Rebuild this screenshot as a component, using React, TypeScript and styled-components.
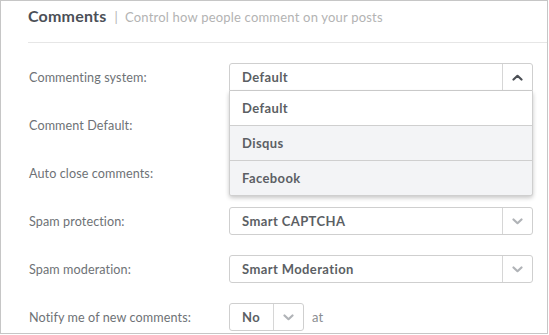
import { createGlobalStyle } from "styled-components";
import styled from "styled-components";

const GlobalStyle = createGlobalStyle`
  html, body {
    margin: 0;
    padding: 0;
    background: #ffffff;
  }
  body {
    font-family: Lato, "Open Sans", "Liberation Sans", sans-serif;
  }
`

const Frame = styled.div`
  box-sizing: border-box;
  width: 548px;
  height: 334px;
  border: 1px solid #c6c6c6;
  background: #fff;
  overflow: hidden;
  padding-left: 27px;
`

const Header = styled.div`
  display: flex;
  align-items: baseline;
  gap: 8px;
  height: 42px;
  padding-top: 5px;
  box-sizing: border-box;
  border-bottom: 1px solid #e6e6e6;
`

const Title = styled.h2`
  margin: 0;
  font-size: 16px;
  font-weight: 700;
  letter-spacing: 0.2px;
  color: #4b5057;
`

const Subtitle = styled.span`
  font-size: 13px;
  color: #b3b3b3;
  letter-spacing: 0.2px;
`

const Form = styled.div`
  display: grid;
  grid-template-columns: 200px 304px;
  row-gap: 20px;
  padding-top: 20px;
  padding-left: 1px;
`

const Label = styled.label`
  display: flex;
  align-items: center;
  height: 28px;
  font-size: 12.6px;
  color: #6e7276;
  letter-spacing: 0.1px;
`

const Field = styled.div`
  position: relative;
  display: flex;
  align-items: center;
  gap: 8px;
`

const Select = styled.div<{ $width?: number; $open?: boolean }>`
  box-sizing: border-box;
  display: flex;
  width: ${(p) => (p.$width ? `${p.$width}px` : "100%")};
  height: 28px;
  border: 1px solid #cfcfcf;
  border-radius: ${(p) => (p.$open ? "3px 3px 0 0" : "3px")};
  background: #fff;
`

const Value = styled.div`
  flex: 1;
  display: flex;
  align-items: center;
  padding-left: 12px;
  font-size: 13px;
  font-weight: 700;
  letter-spacing: 0.4px;
  color: #5c5f64;
`

const Caret = styled.div`
  width: 29px;
  display: flex;
  align-items: center;
  justify-content: center;
  border-left: 1px solid #d6d6d6;
`

const After = styled.span`
  font-size: 13px;
  color: #8a8d91;
`

const Menu = styled.ul`
  position: absolute;
  top: 28px;
  left: 0;
  right: 0;
  z-index: 2;
  margin: 0;
  padding: 0;
  list-style: none;
  border: 1px solid #cfcfcf;
  border-top: none;
  border-radius: 0 0 3px 3px;
  box-shadow: 0 2px 4px rgba(0, 0, 0, 0.22);
  background: #fff;
  overflow: hidden;
`

const Option = styled.li<{ $selected?: boolean }>`
  display: flex;
  align-items: center;
  height: 34px;
  padding-left: 12px;
  font-size: 13px;
  font-weight: 700;
  letter-spacing: 0.4px;
  color: #5c5f64;
  background: ${(p) => (p.$selected ? "#fff" : "#f3f4f6")};
  & + & {
    border-top: 1px solid #cfcfcf;
  }
`

const Chevron = ({ up, color }: { up?: boolean; color: string }) => (
  <svg width="11" height="7" viewBox="0 0 11 7">
    <polyline
      points={up ? "1.5,5.5 5.5,1.8 9.5,5.5" : "1.5,1.5 5.5,5.2 9.5,1.5"}
      fill="none"
      stroke={color}
      strokeWidth="2.2"
      strokeLinecap="round"
      strokeLinejoin="round"
    />
  </svg>
)

const Dropdown = (props: { value?: string; open?: boolean; width?: number }) => (
  <Select $open={props.open} $width={props.width}>
    <Value>{props.value}</Value>
    <Caret>
      <Chevron up={props.open} color={props.open ? "#4b4f55" : "#b0b3b7"} />
    </Caret>
  </Select>
)

const options = ["Default", "Disqus", "Facebook"]

export default function App() {
  return (
    <>
      <GlobalStyle />
      <Frame>
        <Header>
          <Title>Comments</Title>
          <Subtitle>|&nbsp; Control how people comment on your posts</Subtitle>
        </Header>
        <Form>
          <Label>Commenting system:</Label>
          <Field>
            <Dropdown value="Default" open />
            <Menu>
              {options.map((o, i) => (
                <Option key={o} $selected={i == 0}>{o}</Option>
              ))}
            </Menu>
          </Field>

          {/* these two sit under the open menu */}
          <Label>Comment Default:</Label>
          <Field>
            <Dropdown />
          </Field>

          <Label>Auto close comments:</Label>
          <Field>
            <Dropdown />
          </Field>

          <Label>Spam protection:</Label>
          <Field>
            <Dropdown value="Smart CAPTCHA" />
          </Field>

          <Label>Spam moderation:</Label>
          <Field>
            <Dropdown value="Smart Moderation" />
          </Field>

          <Label>Notify me of new comments:</Label>
          <Field>
            <Dropdown value="No" width={75} />
            <After>at</After>
          </Field>
        </Form>
      </Frame>
    </>
  )
}
